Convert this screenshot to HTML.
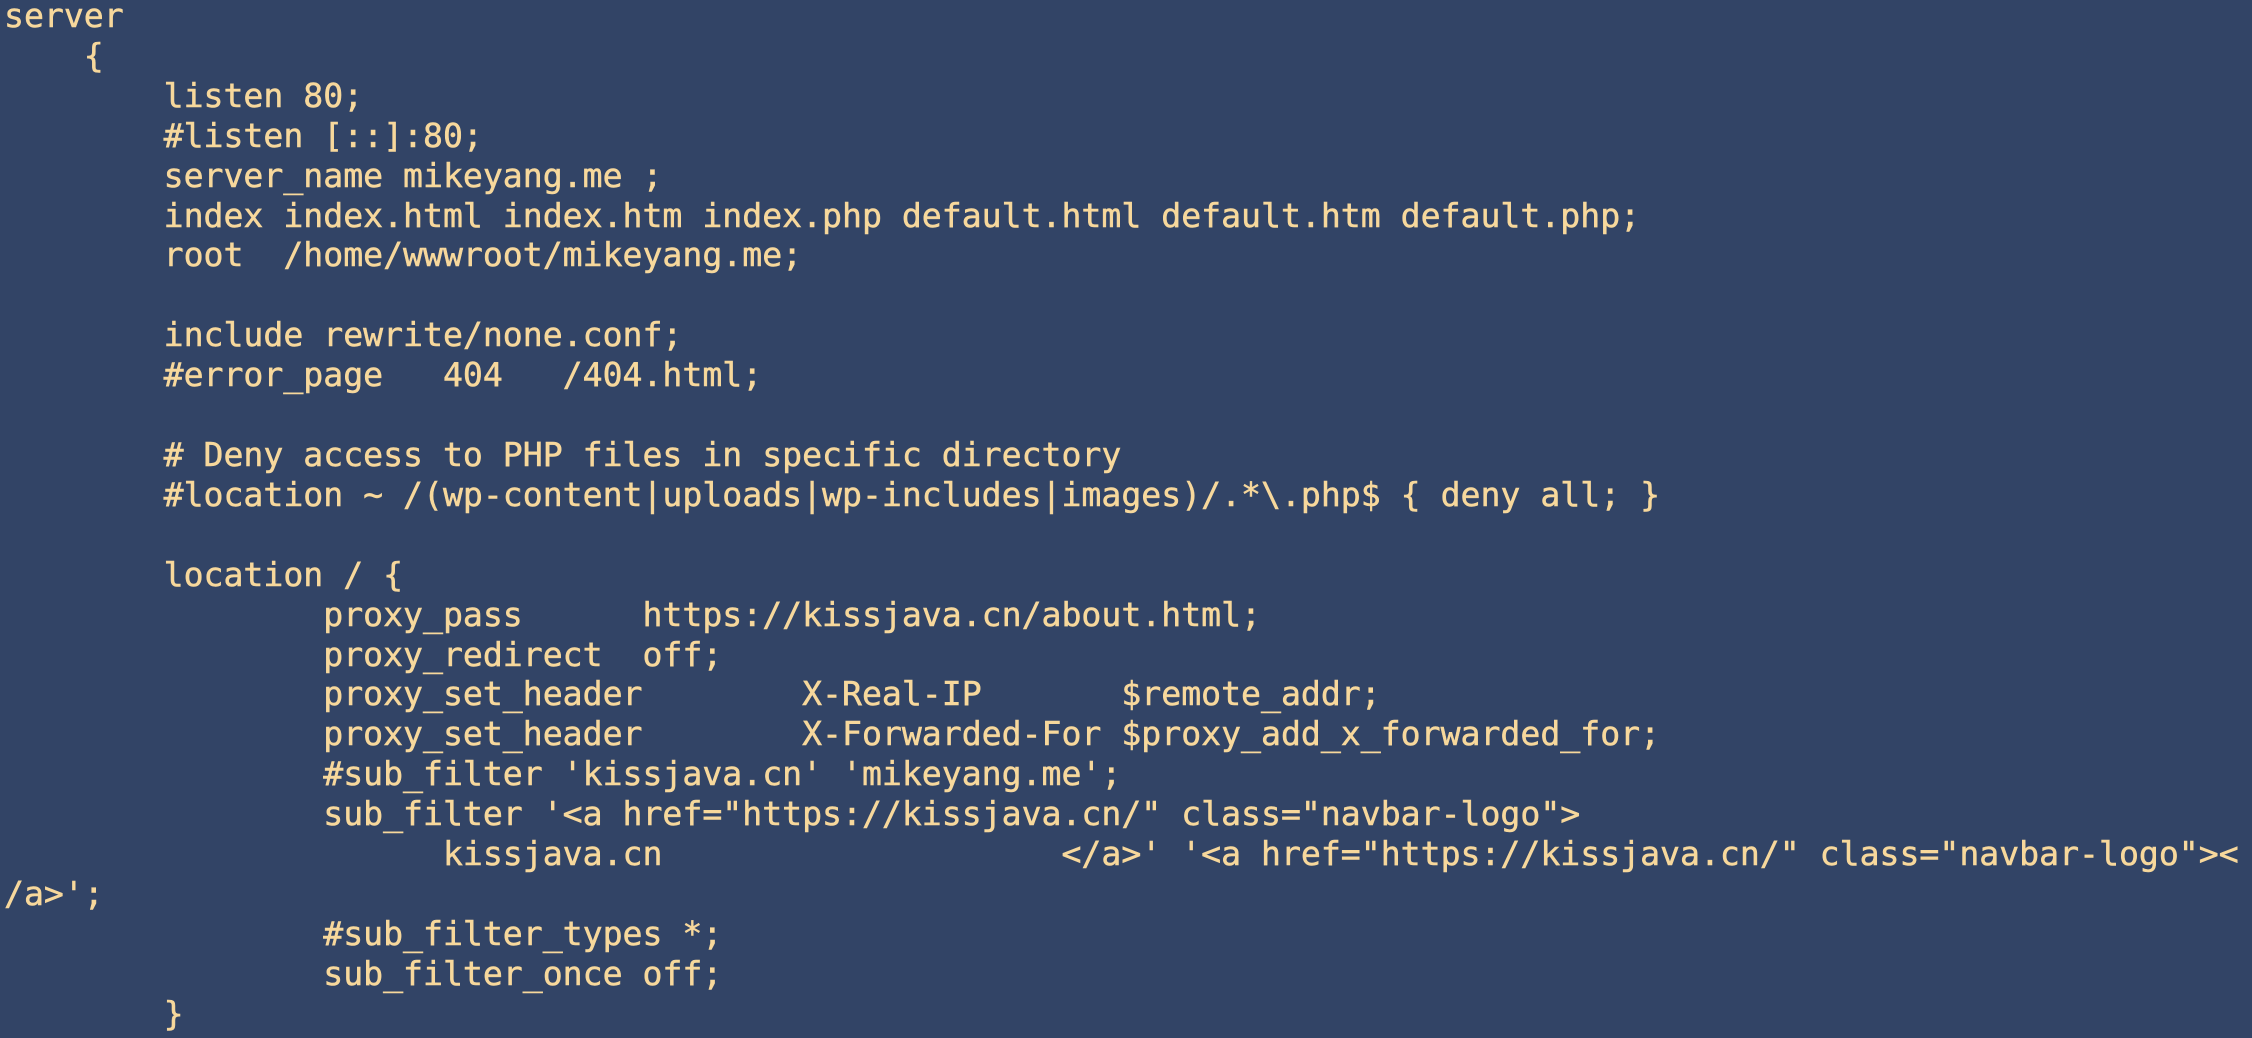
<!DOCTYPE html>
<html><head><meta charset="utf-8"><style>
html,body{margin:0;padding:0;width:2252px;height:1038px;overflow:hidden;background:#324466;}
pre{margin:0;position:absolute;left:4px;top:-4px;font-family:"DejaVu Sans Mono","Liberation Mono",monospace;font-size:33.15px;line-height:39.9px;color:#f7d89c;white-space:pre;-webkit-text-stroke:0.5px #f7d89c;}
</style></head><body><pre>server
    {
        listen 80;
        #listen [::]:80;
        server_name mikeyang.me ;
        index index.html index.htm index.php default.html default.htm default.php;
        root  /home/wwwroot/mikeyang.me;

        include rewrite/none.conf;
        #error_page   404   /404.html;

        # Deny access to PHP files in specific directory
        #location ~ /(wp-content|uploads|wp-includes|images)/.*\.php$ { deny all; }

        location / {
                proxy_pass      https://kissjava.cn/about.html;
                proxy_redirect  off;
                proxy_set_header        X-Real-IP       $remote_addr;
                proxy_set_header        X-Forwarded-For $proxy_add_x_forwarded_for;
                #sub_filter 'kissjava.cn' 'mikeyang.me';
                sub_filter '&lt;a href="https://kissjava.cn/" class="navbar-logo"&gt;
                      kissjava.cn                    &lt;/a&gt;' '&lt;a href="https://kissjava.cn/" class="navbar-logo"&gt;&lt;
/a&gt;';
                #sub_filter_types *;
                sub_filter_once off;
        }
</pre></body></html>
